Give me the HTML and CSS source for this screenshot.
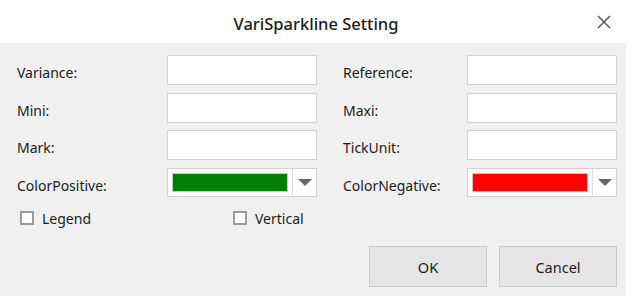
FILE: index.html
```html
<!DOCTYPE html>
<html>
<head>
<meta charset="utf-8">
<title>VariSparkline Setting</title>
<link rel="stylesheet" href="styles.css">
</head>
<body>
<div class="dialog">
  <div class="titlebar">
    <span class="title">VariSparkline Setting</span>
    <span class="close">
      <svg width="14" height="14" viewBox="0 0 14 14"><path d="M1 1 L13 13 M13 1 L1 13" stroke="#5a5a5a" stroke-width="1.5" fill="none"/></svg>
    </span>
  </div>
  <div class="panel">
    <div class="form">
      <label class="lbl">Variance:</label>
      <div class="field"></div>
      <label class="lbl right">Reference:</label>
      <div class="field"></div>

      <label class="lbl">Mini:</label>
      <div class="field"></div>
      <label class="lbl right">Maxi:</label>
      <div class="field"></div>

      <label class="lbl">Mark:</label>
      <div class="field"></div>
      <label class="lbl right">TickUnit:</label>
      <div class="field"></div>

      <label class="lbl">ColorPositive:</label>
      <div class="picker">
        <span class="swatch green"></span>
        <span class="drop"><span class="arrow"></span></span>
      </div>
      <label class="lbl right">ColorNegative:</label>
      <div class="picker">
        <span class="swatch red"></span>
        <span class="drop"><span class="arrow"></span></span>
      </div>
    </div>

    <div class="checks">
      <label class="check"><span class="box"></span>Legend</label>
      <label class="check"><span class="box"></span>Vertical</label>
    </div>

    <div class="buttons">
      <button class="btn">OK</button>
      <button class="btn">Cancel</button>
    </div>
  </div>
</div>
</body>
</html>
```
FILE: styles.css
```css
body {margin: 0; background: #ffffff; font-family: "Noto Sans", "Open Sans", sans-serif; color: #1b1b1b;}
.dialog {width: 632px; height: 296px; display: flex; flex-direction: column; background: #ffffff;}

.titlebar {height: 43px; display: flex; align-items: center; justify-content: center; position: relative;}
.title {font-size: 16.5px; font-weight: 500; padding-top: 4px;}
.close {position: absolute; right: 21px; top: 15px; width: 14px; height: 14px;}
.close svg {display: block;}

.panel {width: 626px; flex: 1; background: #f0f0f0; box-sizing: border-box; padding: 12px 9px 9px 17px; display: flex; flex-direction: column;}

.form {display: grid; grid-template-columns: 150px 150px 150px 150px; grid-auto-rows: 30px; row-gap: 7.5px;}
.lbl {font-size: 14px; line-height: 18px; padding-top: 9px;}
.lbl.right {padding-left: 26px;}
.field {background: #fff; border: 1px solid #d2d2d2;}

.picker {display: flex; background: #fff; border: 1px solid #d2d2d2; height: 29px; box-sizing: border-box;}
.swatch {width: 114px; height: 17px; margin: 4px 4px 0 4px; border: 1px solid #c8c8c8;}
.green {background: #008000;}
.red {background: #ff0000;}
.drop {flex: 1; border-left: 1px solid #dedede; display: flex; align-items: center; justify-content: center;}
.arrow {width: 0; height: 0; border-left: 7px solid transparent; border-right: 7px solid transparent; border-top: 7px solid #666;}

.checks {display: grid; grid-template-columns: 213px auto; padding-left: 3px; margin-top: 11px;}
.check {display: flex; align-items: center; font-size: 14px;}
.box {width: 14px; height: 14px; box-sizing: border-box; border: 2px solid #9a9a9a; background: #fff; margin-right: 8px;}

.buttons {margin-top: auto; display: flex; justify-content: flex-end; gap: 12px;}
.btn {width: 118px; height: 41px; background: #e5e5e5; border: 1px solid #cccccc; font-family: inherit; font-size: 14.5px; color: #1b1b1b; padding: 0;}
```
